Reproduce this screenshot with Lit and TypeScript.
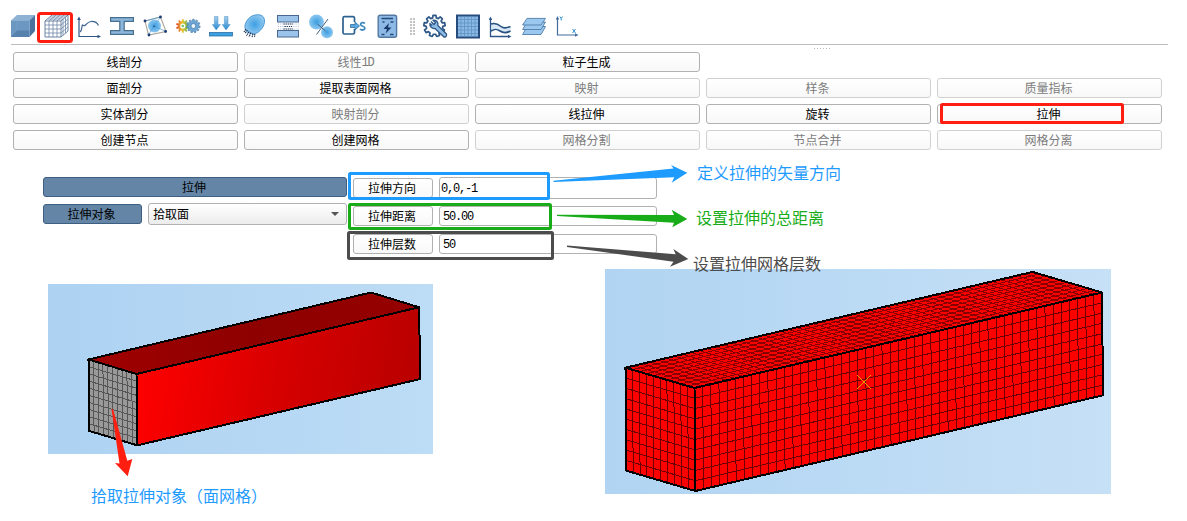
import { LitElement, html, svg, css } from "lit";
import { customElement } from "lit/decorators.js";

type Pt = [number, number];
type Quad = [Pt, Pt, Pt, Pt];

const mix = (a: Pt, b: Pt, t: number): Pt => [a[0] + (b[0] - a[0]) * t, a[1] + (b[1] - a[1]) * t];
const pts = (list: Pt[]) => list.map((p) => p.join(",")).join(" ");

/** Path of the inner grid lines of a quad a-b-c-d, nu cells along a-b and nv along a-d. */
function meshPath(q: Quad, nu: number, nv: number): string {
  const [a, b, c, d] = q;
  let out = "";
  const seg = (p: Pt, r: Pt) => {
    out += `M${p[0].toFixed(2)} ${p[1].toFixed(2)}L${r[0].toFixed(2)} ${r[1].toFixed(2)}`;
  };
  for (let i = 1; i < nu; i++) seg(mix(a, b, i / nu), mix(d, c, i / nu));
  for (let j = 1; j < nv; j++) seg(mix(a, d, j / nv), mix(b, c, j / nv));
  return out;
}

const gearPath = (cx: number, cy: number, r: number, R: number, n: number) => {
  const p: string[] = [];
  const s = (Math.PI * 2) / n;
  for (let i = 0; i < n; i++) {
    const t = i * s - Math.PI / 2;
    for (const [o, k] of [[-0.32, r], [-0.2, R], [0.2, R], [0.32, r]])
      p.push(`${(cx + k * Math.cos(t + o * s)).toFixed(2)} ${(cy + k * Math.sin(t + o * s)).toFixed(2)}`);
  }
  return `M${p.join("L")}Z`;
};

const NAVY = "#2d5688";

const icons = {
  cube: svg`<path d="M0 6.5L6 1H24L18.5 6.5Z" fill="#8db2d4"/><path d="M18.5 6.5L24 1V17L18.5 23Z" fill="#4a749e"/>
    <path d="M0 6.5H18.5V23H0Z" fill="#6c97c1"/><path d="M0 23L6 16.500H18.500V23Z" fill="#5581ac"/><path d="M0 6.5H18.5V23M18.5 6.5L24 1M6 6.500V16.500" fill="none" stroke="#7fa5ca" stroke-width=".6" opacity=".8"/>`,
  lattice: svg`<path d="M1 7H17V23H1ZM1 7L8 1H24L17 7M24 1V17L17 23" fill="#fff" stroke="#5b7698" stroke-width=".9"/>
    <path d="M5 7V23M9 7V23M13 7V23M1 11H17M1 15H17M1 19H17M5 7L12 1M9 7L16 1M13 7L20 1M3.5 5H19.5M6 3H22M19 5.3V21.3M21.5 3.2V19.2M17 11L24 5M17 15L24 9M17 19L24 13" fill="none" stroke="#6c86a8" stroke-width=".8"/>`,
  curve: svg`<path d="M2 4V22.5H22" fill="none" stroke="${NAVY}" stroke-width="1.2"/><path d="M2 2.5L.2 6H3.8ZM24 22.5L20.5 20.7V24.3Z" fill="${NAVY}"/>
    <path d="M3 18C6 16 4 9 6.500 11.500C9 13 9 8 14 7.500C18 7.200 20 8.500 21.500 11.500" fill="none" stroke="#3c6490" stroke-width="1.2"/>`,
  beam: svg`<path d="M.6 3.600H23.400V7.400H14.200V16.600H23.400V20.400H.6V16.600H9.800V7.400H.6Z" fill="#8db6dc" stroke="#47708f" stroke-width="1.2"/>`,
  ball: svg`<path d="M2 7L17.500 3L23 17.500L5.500 21Z" fill="none" stroke="#aaa69b" stroke-width="1.100"/><circle cx="11.500" cy="12" r="6.500" fill="url(#gBall)"/>
    <path d="M2 7L17.500 3L11 12L5.500 21M11 12L23 17.500" fill="none" stroke="#4e9bd7" stroke-width=".7"/>
    <g fill="#1e3b73"><circle cx="2" cy="7" r="1.400"/><circle cx="17.500" cy="3" r="1.400"/><circle cx="22.600" cy="17.500" r="1.400"/><circle cx="6" cy="21" r="1.400"/><circle cx="11" cy="12.300" r=".8"/></g>`,
  gears: svg`<path d="${gearPath(6.8, 12, 5, 6.8, 10)}" fill="url(#gRain)"/><circle cx="6.800" cy="12" r="2.600" fill="#fff"/><circle cx="6.800" cy="12" r="1.300" fill="#6fc36b"/>
    <path d="${gearPath(17.4, 12, 5.2, 6.8, 11)}" fill="#6fa8d4" stroke="#3e77aa" stroke-width=".6"/><circle cx="17.400" cy="12" r="2.500" fill="#e8f3fb" stroke="#3e77aa" stroke-width=".8"/>`,
  press: svg`<path d="M5.400 2.500H9V10.500H11.400L7.200 16L3.300 10.500H5.400ZM15.400 2.500H19V10.500H21.200L17 16L13.200 10.500H15.400Z" fill="url(#gDown)" stroke="#4d93c8" stroke-width=".5"/><rect x=".5" y="18.500" width="23" height="3.500" fill="#3aa0e4" stroke="#2f6fa6" stroke-width=".8"/>`,
  blob: svg`<path d="M2 14C1 9 6 2 12 1C18 0 22 2 21.500 8C21 14 15 20 10 20C5 19 3 18 2 14Z" fill="url(#gBall)" stroke="#3b8ccb" stroke-width=".8"/>
    <path d="M3 15L1 18M4.500 16L2 19.500M6 17.500L3.500 22M8 18.500L6 23M10 19.500L9 23.500M11.800 20L11.500 23" stroke="#1d2f55" stroke-width="1.100" stroke-dasharray="1.6 .6"/>`,
  plates: svg`<rect x="1.500" y="1.500" width="21" height="6.500" fill="#9cc3ea" stroke="#49698f"/><rect x="1.500" y="16.500" width="21" height="6.500" fill="#9cc3ea" stroke="#49698f"/>
    <path d="M2 10H23M2 12.500H23M2 15H23" stroke="#aebccd" stroke-width="1" stroke-dasharray="1 1.200"/><path d="M7.500 10H17M8.500 12.500H16M7.500 15H17" stroke="#1c2b4b" stroke-width="1.200" stroke-dasharray="1.200 1"/>`,
  pair: svg`<circle cx="7.500" cy="8" r="7.500" fill="url(#gBall)"/><circle cx="18" cy="18.200" r="6" fill="url(#gBall)"/><path d="M19 5L7.500 20.500M8.500 10L16.500 17" stroke="#45617f" stroke-width="1"/>`,
  exportS: svg`<path d="M12.500 8V4.200Q12.500 2.600 11 2.600H2.500Q1 2.600 1 4.200V18.500Q1 20 2.500 20H11Q12.500 20 12.500 18.500V15" fill="none" stroke="#2d618f" stroke-width="1.700"/>
    <path d="M8.500 10.500H13V8L17.500 12L13 16V13.500H8.500Z" fill="#58a9e0" stroke="#316c9e" stroke-width=".8"/><path d="M22.800 9.500C21.500 8 18.500 8.600 18.600 10.500C18.800 12.700 22.900 11.800 22.900 14.200C22.800 16.300 19.400 16.500 18 15" fill="none" stroke="#3f88bd" stroke-width="1.800"/>`,
  battery: svg`<rect x="3.200" y="1.200" width="18.400" height="22" rx="2" fill="#8db9e7" stroke="#52789f" stroke-width="1.400"/><path d="M6.500 4.500H18M7.500 8H9.500M15.500 8H18.500M6.500 20.500H9.500M15 20.500H18.500" stroke="#274b79" stroke-width="1.400"/><path d="M14 9L8.500 15H12L10.500 19.500L16.500 13.500H13Z" fill="#173866"/>`,
  settings: svg`<path d="${gearPath(11.5, 12, 8.3, 10.7, 9)}" fill="none" stroke="#2f5887" stroke-width="1.700" stroke-linejoin="round"/>
    <path d="M8 7.500L11 10.500L12.500 8.500L10 6.200C13 5.600 15.500 8 14.800 11.500L23.500 20Q24 22 22.500 23H21L12 14.500C9 15 6.500 12.500 6.900 9.500L9.200 11.500" fill="#8dbce6" stroke="#2f5887" stroke-width="1.300" stroke-linejoin="round"/>`,
  grid: svg`<rect x="1" y="1.500" width="22" height="22" fill="#8bb9e5" stroke="#264c7c" stroke-width="2"/><path d="M5 2.500V22.500M8.500 2.500V22.500M12 2.500V22.500M15.500 2.500V22.500M19 2.500V22.500M2 5.500H22M2 9H22M2 12.500H22M2 16H22M2 19.500H22" stroke="#5f92c2" stroke-width=".8"/>`,
  waves: svg`<path d="M1.500 4V22.500H20" fill="none" stroke="${NAVY}" stroke-width="1.300"/><path d="M1.500 2.500L-.2 6H3.200ZM22.500 22.500L19 20.700V24.300Z" fill="${NAVY}"/>
    <path d="M2 10C6 8.500 9 10 12 12.500C15 15 18 14 21.500 12.500V17C17 19.500 14 19 11 17C8 15 6 15 2 16.500Z" fill="#a8cdec" opacity=".45"/><path d="M2 10C6 8.500 9 10 12 12.500C15 15 18 14 21.500 12.500M2 17C6 14.500 8 15 11 17C14 19 17 19.500 21.500 17" fill="none" stroke="#28517e" stroke-width="1.600"/>`,
  layers: svg`<g fill="#9bc8ee" stroke="#507da9" stroke-width=".9"><path d="M.6 20.500L5 12.500H23.500L19 20.500Z"/><path d="M.6 15.500L5 8H23.500L19 15.500Z"/><path d="M.6 11L5 4.400H23.500L19 11Z"/></g>`,
  axes: svg`<path d="M2.500 4V21H21" fill="none" stroke="#426b9b" stroke-width="1.200"/><path d="M2.500 2L.8 5.500H4.200ZM23.500 21L20 19.300V22.700Z" fill="#426b9b"/>
    <path d="M4.800 2.500L6.200 4.500L7.600 2.500M6.200 4.500V6.500M17.500 15L20.500 19M20.500 15L17.500 19" fill="none" stroke="#338fd0" stroke-width="1"/>`,
};

const leftTools = ["cube", "lattice", "curve", "beam", "ball", "gears", "press", "blob", "plates", "pair", "exportS", "battery"] as const;
const rightTools = ["settings", "grid", "waves", "layers", "axes"] as const;

/** Command rows; a leading "-" marks a disabled command, an empty entry an empty cell. */
const commands = [
  "线剖分", "-线性1D", "粒子生成", "", "",
  "面剖分", "提取表面网格", "-映射", "-样条", "-质量指标",
  "实体剖分", "-映射剖分", "线拉伸", "旋转", "拉伸",
  "创建节点", "创建网格", "-网格分割", "-节点合并", "-网格分离",
];

const params = [
  { label: "拉伸方向", value: "0,0,-1", tall: true },
  { label: "拉伸距离", value: "50.00", tall: false },
  { label: "拉伸层数", value: "50", tall: false },
];

@customElement("app-root")
export class AppRoot extends LitElement {
  static styles = css`
    :host { display: block; position: relative; width: 1187px; height: 521px; overflow: hidden; background: #fff;
      font: 12px/18px "Noto Sans CJK SC", sans-serif; color: #000; }
    * { box-sizing: border-box; }
    .toolbar { display: flex; gap: 9.090px; height: 45px; margin: 0 19px 0 11px; padding-top: 14px; border-bottom: 1px solid #bdbdbd; }
    .icon { width: 24px; height: 24px; overflow: visible; flex: none; }
    .grip { width: 5px; height: 17px; margin: 4px -1px 0 2px; background: radial-gradient(circle at 1px 1px, #c0c0c0 .7px, transparent .9px) 0 0 / 3px 3px; }
    .handle { width: 17px; height: 1px; margin: 3px 0 3px 814px; background: repeating-linear-gradient(90deg, #b8b8b8 0 1px, transparent 1px 3px); }
    .commands { display: grid; grid-template-columns: repeat(5, 225px); grid-auto-rows: 20px; gap: 6px; padding-left: 13px; }
    .btn { display: flex; align-items: center; justify-content: center; height: 20px; padding-right: 2px; border: 1px solid #b1b1b1; border-radius: 3px;
      background: linear-gradient(#fff, #f8f8f8); white-space: nowrap; }
    .off { border-color: #d0d0d0; color: #7c7c7c; }
    .mono { font-family: "Liberation Mono", monospace; letter-spacing: -1.2px; }
    .btn .mono { padding-top: 1px; }
    .form { display: flex; gap: 6px; margin-top: 27px; padding-left: 43px; }
    .left { display: flex; flex-direction: column; gap: 6px; width: 304px; }
    .pick { display: flex; align-items: center; gap: 6px; }
    .blue { background: #6485a6; border-color: #3c5f82; }
    .target { width: 99px; }
    .combo { display: flex; align-items: center; justify-content: space-between; width: 199px; height: 22px; padding: 0 7px 0 4px;
      border: 1px solid #b1b1b1; border-radius: 3px; background: linear-gradient(#fff, #ececec); }
    .caret { width: 8px; height: 4px; background: #555; clip-path: polygon(0 0, 100% 0, 50% 100%); }
    .right { display: flex; flex-direction: column; gap: 6px; }
    .param { display: flex; align-items: center; gap: 6px; height: 22px; }
    .name { width: 80px; }
    .field { width: 218px; height: 20px; border: 1px solid #b1b1b1; border-radius: 3px; padding: 1px 0 0 3px; line-height: 18px; }
    .tall { height: 22px; padding-left: 1px; line-height: 20px; }
    .figures { display: flex; align-items: flex-start; gap: 172px; margin-top: 14px; padding-left: 48px; }
    .source { width: 385px; padding-top: 15px; }
    .view { display: block; }
    .viewA { width: 385px; height: 170px; background: linear-gradient(90deg, #add2f2, #bddcf5); }
    .viewB { width: 506px; height: 225px; background: linear-gradient(90deg, #b0d4f2, #c6e0f6); }
    .caption, .note { font-size: 16px; line-height: 24px; font-weight: 400; white-space: nowrap; }
    .caption { padding: 29px 0 0 43px; color: #1e9bff; }
    .note { position: absolute; }
    .noteBlue { left: 697px; top: 160px; color: #1e9bff; }
    .noteGreen { left: 696px; top: 205px; color: #18ad18; }
    .noteDark { left: 693px; top: 251px; color: #4c4c4c; }
    .overlay { position: absolute; left: 0; top: 0; width: 1187px; height: 521px; pointer-events: none; }
  `;

  private icon(name: keyof typeof icons) {
    return html`<svg class="icon" viewBox="0 0 24 24">${icons[name]}</svg>`;
  }

  private command(text: string) {
    if (!text) return html`<span></span>`;
    const off = text.startsWith("-");
    const label = off ? text.slice(1) : text;
    const cut = label.search(/[0-9A-Z]/);
    return html`<div class="btn ${off ? "off" : ""}">${cut < 0 ? label : html`${label.slice(0, cut)}<span class="mono">${label.slice(cut)}</span>`}</div>`;
  }

  private solid() {
    const A: Pt = [88.5, 359.5], B: Pt = [371, 292.5], C: Pt = [419, 307.3], D: Pt = [136.5, 374];
    const E: Pt = [89.3, 431], F: Pt = [137.3, 445.3], G: Pt = [420.3, 379];
    return html`<svg class="view viewA" viewBox="48 284 385 170" shape-rendering="crispEdges">
      <polygon points=${pts([A, B, C, D])} fill="url(#gTop)" />
      <polygon points=${pts([D, C, G, F])} fill="url(#gSide)" />
      <polygon points=${pts([A, D, F, E])} fill="#999" />
      <path d=${meshPath([A, D, F, E], 10, 10)} stroke="#555" fill="none" />
      <path d="M${pts([A, B, C, G, F, E])}ZM${pts([A, D, C])}M${pts([D, F])}" fill="none" stroke="#000" stroke-width="2" />
    </svg>`;
  }

  private meshed() {
    const A: Pt = [625.5, 367.7], B: Pt = [1032.5, 271.9], C: Pt = [1102, 292.5], D: Pt = [694.5, 388];
    const E: Pt = [626.3, 470.7], F: Pt = [695.4, 491], G: Pt = [1103, 395.3];
    return html`<svg class="view viewB" viewBox="605 269 506 225" shape-rendering="crispEdges">
      <polygon points=${pts([A, B, C, G, F, E])} fill="#f00" />
      <path d=${meshPath([A, B, C, D], 50, 10)} stroke="#860000" fill="none" />
      <path d=${meshPath([D, C, G, F], 50, 10)} stroke="#6c0000" fill="none" />
      <path d=${meshPath([A, D, F, E], 10, 10)} stroke="#6c0000" fill="none" />
      <path d="M${pts([A, B, C, G, F, E])}ZM${pts([A, D, C])}M${pts([D, F])}" fill="none" stroke="#000" stroke-width="2" />
      <path d="M857 375L871 389M871 375L857 389" stroke="#e6a000" fill="none" />
    </svg>`;
  }

  render() {
    return html`
      <div class="toolbar">
        ${leftTools.map((n) => this.icon(n))}
        <div class="grip"></div>
        ${rightTools.map((n) => this.icon(n))}
      </div>
      <div class="handle"></div>
      <div class="commands">${commands.map((c) => this.command(c))}</div>
      <div class="form">
        <div class="left">
          <div class="btn blue">拉伸</div>
          <div class="pick">
            <div class="btn blue target">拉伸对象</div>
            <div class="combo"><span>拾取面</span><span class="caret"></span></div>
          </div>
        </div>
        <div class="right">
          ${params.map((p) => html`<div class="param">
            <div class="btn name">${p.label}</div>
            <div class="field mono ${p.tall ? "tall" : ""}">${p.value}</div>
          </div>`)}
        </div>
      </div>
      <div class="figures">
        <div class="source">${this.solid()}<div class="caption">拾取拉伸对象（面网格）</div></div>
        ${this.meshed()}
      </div>
      <svg class="overlay" viewBox="0 0 1187 521">
        <defs>
          <radialGradient id="gBall"><stop stop-color="#3d9fe3" /><stop offset="1" stop-color="#8dc7ef" /></radialGradient>
          <linearGradient id="gRain"><stop stop-color="#e2402c" /><stop offset=".45" stop-color="#efc42e" /><stop offset="1" stop-color="#43b35b" /></linearGradient>
          <linearGradient id="gDown" x2="0" y2="1"><stop stop-color="#a6cdea" /><stop offset="1" stop-color="#268bd2" /></linearGradient>
          <linearGradient id="gTop"><stop stop-color="#a00000" /><stop offset=".5" stop-color="#8e0000" /><stop offset="1" stop-color="#960000" /></linearGradient>
          <linearGradient id="gSide" gradientUnits="userSpaceOnUse" x1="137" y1="385" x2="415" y2="425"><stop stop-color="#fe0000" /><stop offset=".5" stop-color="#d60000" /><stop offset="1" stop-color="#b80000" /></linearGradient>
        </defs>
        <g fill="none" stroke-width="3" stroke-linejoin="round">
          <rect x="38.500" y="13.500" width="33" height="28" rx="2" stroke="#ff1e10" />
          <rect x="941.500" y="104.500" width="181" height="18" rx="1" stroke="#ff1e10" />
          <rect x="349.500" y="173.500" width="199" height="25" rx="1" stroke="#1e9bff" />
          <rect x="349.500" y="204.500" width="201" height="24" rx="1" stroke="#18ad18" />
          <rect x="348.500" y="232.500" width="204" height="26" rx="1" stroke="#4c4c4c" />
        </g>
        <polygon points="553.5,180.700 673.500,168.500 671,165 687.300,172.700 671.700,182.700 674.300,177.300 553.500,182" fill="#1e9bff" />
        <polygon points="557,214.800 674,215 671.700,209.700 687.300,219 672.300,227.300 674,222.700 557,216" fill="#18ad18" />
        <polygon points="567,245.600 675.700,254.300 673.300,249 688.300,259 670,266.700 673.500,261.700 567,247" fill="#4c4c4c" />
        <polygon points="111.500,409 113,409 127.300,460.700 132.300,459 127.700,476.300 115,463 119.500,463.500" fill="#ff1e10" />
      </svg>
      <div class="note noteBlue">定义拉伸的矢量方向</div>
      <div class="note noteGreen">设置拉伸的总距离</div>
      <div class="note noteDark">设置拉伸网格层数</div>
    `;
  }
}
